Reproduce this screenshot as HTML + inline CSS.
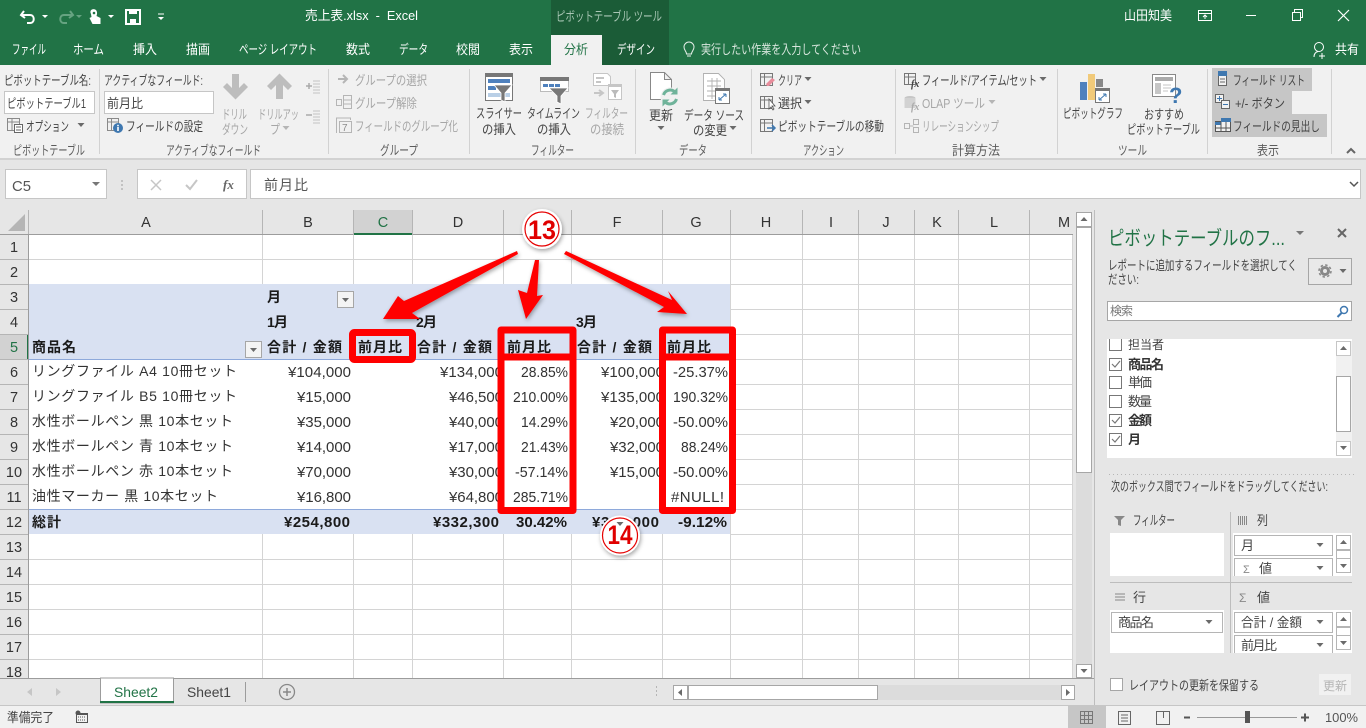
<!DOCTYPE html>
<html lang="ja"><head><meta charset="utf-8"><title>売上表.xlsx - Excel</title>
<style>
html,body{margin:0;padding:0;background:#e6e6e6;overflow:hidden;width:1366px;height:728px}
svg{display:block}
text{font-family:"Liberation Sans","Noto Sans CJK JP",sans-serif;font-size:13px;fill:#444;white-space:pre}
.t{fill:#fff;font-size:13px}
.r{fill:#444;font-size:13px}
.d{fill:#a6a6a6;font-size:13px}
.g{fill:#5c5c5c;font-size:13px}
.c{fill:#333;font-size:15px}
.l{fill:#333;font-size:14px}
.b{fill:#1a1a1a;font-size:14px;font-weight:bold}
.n{fill:#1a1a1a;font-size:15px;font-weight:bold}
.h{fill:#333;font-size:14.500px;text-anchor:middle}
.p{fill:#444;font-size:13px}
.m{fill:#e00000;font-size:27px;font-weight:bold;text-anchor:middle}
</style></head><body>
<svg xmlns="http://www.w3.org/2000/svg" width="1366" height="728" viewBox="0 0 1366 728">
<defs>
<polygon id="dn" points="-3.5,-2 3.5,-2 0,2" fill="#6a6a6a"/>
<polygon id="dn2" points="-3.5,-2 3.5,-2 0,2" fill="#b5b5b5"/>
<polygon id="up" points="-3.5,2 3.5,2 0,-2" fill="#6a6a6a"/>
<filter id="s" x="-30%" y="-30%" width="160%" height="160%"><feDropShadow dx="1" dy="2" stdDeviation="2" flood-color="#000" flood-opacity=".35"/></filter>
</defs>

<!-- base -->
<rect width="1366" height="728" fill="#e6e6e6"/>
<rect width="1366" height="65" fill="#217346"/>
<rect x="551" width="118" height="65" fill="#1b5c37"/>
<rect x="551" y="35" width="51" height="30" fill="#f1f1f1"/>
<rect y="65" width="1366" height="93" fill="#f1f1f1"/>
<rect y="158" width="1366" height="2" fill="#d2d2d2"/>

<!-- QAT -->
<path d="M24 11l-3 4 4 3M22 15h8c5 0 5 8 0 8h-3" fill="none" stroke="#fff" stroke-width="2"/>
<polygon points="42,15 48,15 45,18" fill="#fff"/>
<path d="M70 11l3 4-4 3M72 15h-8c-5 0-5 8 0 8h3" fill="none" stroke="#66a381" stroke-width="2"/>
<polygon points="76,15 82,15 79,18" fill="#66a381"/>
<path d="M91 14c-3-6 7-7 6 0l-.5 2 4 2v6h-8l-3-6 2-1z" fill="#fff"/><circle cx="94" cy="13" r="1.3" fill="#217346"/>
<polygon points="108,15 114,15 111,18" fill="#fff"/>
<path d="M126 10h14v14h-14z" fill="none" stroke="#fff" stroke-width="2"/><rect x="129" y="10" width="8" height="4" fill="#fff"/><rect x="130" y="19" width="6" height="5" fill="#fff"/>
<path d="M158 14h6" stroke="#fff"/><polygon points="158,17 164,17 161,20" fill="#fff"/>
<text class="t" x="305" y="20" textLength="113" lengthAdjust="spacingAndGlyphs">売上表.xlsx  -  Excel</text>
<text x="556" y="21" style="fill:#a9c7b5;font-size:13px" textLength="106" lengthAdjust="spacingAndGlyphs">ピボットテーブル ツール</text>
<text class="t" x="1124" y="20" textLength="48" lengthAdjust="spacingAndGlyphs">山田知美</text>
<path d="M1198.500 10.500h13v10h-13zM1198.500 13.500h13M1205 19v-4M1203 17l2-2 2 2" fill="none" stroke="#fff"/>
<path d="M1246 15.500h10" stroke="#fff"/>
<path d="M1292.500 12.500h8v8h-8zM1294.500 12v-2.500h8v8h-2" fill="none" stroke="#fff"/>
<path d="M1338 10l11 11M1349 10l-11 11" stroke="#fff" stroke-width="1.200"/>

<!-- tabs -->
<text class="t" x="12" y="54" textLength="34" lengthAdjust="spacingAndGlyphs">ファイル</text>
<text class="t" x="73" y="54" textLength="31" lengthAdjust="spacingAndGlyphs">ホーム</text>
<text class="t" x="133" y="54" textLength="24" lengthAdjust="spacingAndGlyphs">挿入</text>
<text class="t" x="186" y="54" textLength="24" lengthAdjust="spacingAndGlyphs">描画</text>
<text class="t" x="239" y="54" textLength="78" lengthAdjust="spacingAndGlyphs">ページ レイアウト</text>
<text class="t" x="346" y="54" textLength="24" lengthAdjust="spacingAndGlyphs">数式</text>
<text class="t" x="399" y="54" textLength="29" lengthAdjust="spacingAndGlyphs">データ</text>
<text class="t" x="456" y="54" textLength="24" lengthAdjust="spacingAndGlyphs">校閲</text>
<text class="t" x="509" y="54" textLength="24" lengthAdjust="spacingAndGlyphs">表示</text>
<text x="564" y="54" style="fill:#217346" textLength="24" lengthAdjust="spacingAndGlyphs">分析</text>
<text class="t" x="617" y="54" textLength="38" lengthAdjust="spacingAndGlyphs">デザイン</text>
<path d="M686.500 54c0-3-2.500-3.500-2.500-7a5 5 0 0 1 10 0c0 3.500-2.500 4-2.500 7zM687 56h4" fill="none" stroke="#e6efe9"/>
<text x="701" y="54" style="fill:#d8e6dd" textLength="160" lengthAdjust="spacingAndGlyphs">実行したい作業を入力してください</text>
<circle cx="1319" cy="47" r="4.500" fill="none" stroke="#fff"/><path d="M1314 57c0-4 2-5 4-5.500M1322 53v6M1319 56h6" fill="none" stroke="#fff"/>
<text class="t" x="1335" y="54" textLength="24" lengthAdjust="spacingAndGlyphs">共有</text>

<!-- ribbon separators -->
<path d="M99.500 69v85M328.500 69v85M469.500 69v85M635.500 69v85M751.500 69v85M895.500 69v85M1057.500 69v85M1207.500 69v85M1331.500 69v85" stroke="#d2d2d2"/>
<g class="grp">
<text class="g" x="13" y="155" textLength="72" lengthAdjust="spacingAndGlyphs">ピボットテーブル</text>
<text class="g" x="166" y="155" textLength="95" lengthAdjust="spacingAndGlyphs">アクティブなフィールド</text>
<text class="g" x="380" y="155" textLength="38" lengthAdjust="spacingAndGlyphs">グループ</text>
<text class="g" x="531" y="155" textLength="43" lengthAdjust="spacingAndGlyphs">フィルター</text>
<text class="g" x="679" y="155" textLength="28" lengthAdjust="spacingAndGlyphs">データ</text>
<text class="g" x="803" y="155" textLength="41" lengthAdjust="spacingAndGlyphs">アクション</text>
<text class="g" x="952" y="155" textLength="48" lengthAdjust="spacingAndGlyphs">計算方法</text>
<text class="g" x="1118" y="155" textLength="29" lengthAdjust="spacingAndGlyphs">ツール</text>
<text class="g" x="1257" y="155" textLength="22" lengthAdjust="spacingAndGlyphs">表示</text>
</g>
<path d="M1347 153l4-4 4 4" fill="none" stroke="#666" stroke-width="2"/>

<!-- pivot name group -->
<text class="r" x="4" y="85" textLength="87" lengthAdjust="spacingAndGlyphs">ピボットテーブル名:</text>
<rect x="4.500" y="91.500" width="90" height="22" fill="#fff" stroke="#c6c6c6"/>
<text class="r" x="7" y="108" textLength="79" lengthAdjust="spacingAndGlyphs">ピボットテーブル1</text>
<path d="M7.500 118.500h12v12h-12zM7.500 122h12M12 118.500v12" fill="none" stroke="#8a8a8a"/><rect x="14.500" y="124.500" width="8" height="8" fill="#fff" stroke="#666"/><path d="M16 127h5M16 130h5" stroke="#666"/>
<text class="r" x="26" y="131" textLength="43" lengthAdjust="spacingAndGlyphs">オプション</text>
<use href="#dn" x="81" y="125"/>

<!-- active field -->
<text class="r" x="104" y="85" textLength="99" lengthAdjust="spacingAndGlyphs">アクティブなフィールド:</text>
<rect x="104.500" y="91.500" width="109" height="22" fill="#fff" stroke="#c6c6c6"/>
<text class="r" x="107" y="108" textLength="36" lengthAdjust="spacingAndGlyphs">前月比</text>
<path d="M107.500 118.500h11v12h-11zM107.500 122h11M111.500 118.500v12" fill="none" stroke="#8a8a8a"/>
<circle cx="118" cy="128" r="5" fill="#3f78b0"/><rect x="117.200" y="127" width="1.600" height="4" fill="#fff"/><rect x="117.200" y="124.800" width="1.600" height="1.500" fill="#fff"/>
<text class="r" x="126" y="131" textLength="77" lengthAdjust="spacingAndGlyphs">フィールドの設定</text>
<path d="M232 74h7v14l5-5 4 4-12.500 12.500L223 87l4-4 5 5z" fill="#bdbdbd"/>
<path d="M276 99h7V85l5 5 4-4-12.500-12.500L267 86l4 4 5-5z" fill="#bdbdbd"/>
<text class="d" x="222" y="119" textLength="25" lengthAdjust="spacingAndGlyphs">ドリル</text>
<text class="d" x="222" y="134" textLength="26" lengthAdjust="spacingAndGlyphs">ダウン</text>
<text class="d" x="258" y="119" textLength="41" lengthAdjust="spacingAndGlyphs">ドリルアッ</text>
<text class="d" x="270" y="134" textLength="10" lengthAdjust="spacingAndGlyphs">プ</text>
<use href="#dn2" x="286" y="128"/>
<path d="M313 81h7M313 84h7M313 87h7M313 90h7M313 93h7" stroke="#c4c4c4"/><path d="M306 86h6M309 83v6" stroke="#aaa" stroke-width="1.500"/>
<path d="M313 111h7M313 114h7M313 117h7M313 120h7M313 123h7" stroke="#c4c4c4"/><path d="M306 115h6" stroke="#aaa" stroke-width="1.500"/>

<!-- group -->
<path d="M338 79h8M343 75l4 4-4 4" fill="none" stroke="#b5b5b5" stroke-width="2"/>
<text class="d" x="355" y="85" textLength="72" lengthAdjust="spacingAndGlyphs">グループの選択</text>
<path d="M343.500 95.500h8v13h-8zM343.500 100h8M343.500 104h8M336.500 99.500h5v6h-5z" fill="none" stroke="#b5b5b5"/>
<text class="d" x="355" y="108" textLength="62" lengthAdjust="spacingAndGlyphs">グループ解除</text>
<path d="M336.500 133v-15h14v2M339.500 121.500h12v11h-12z" fill="none" stroke="#b5b5b5"/>
<text x="342" y="131" style="font-size:10px;fill:#8d8d8d">7</text>
<text class="d" x="355" y="131" textLength="103" lengthAdjust="spacingAndGlyphs">フィールドのグループ化</text>

<!-- filter -->
<rect x="485.500" y="73.500" width="27" height="27" fill="#fff" stroke="#777"/><rect x="485" y="73" width="28" height="4" fill="#777"/>
<rect x="488" y="79" width="22" height="4" fill="#4f81bd"/><rect x="488" y="86" width="8" height="4" fill="#4f81bd"/><rect x="488" y="93" width="22" height="4" fill="#b9cfe6"/>
<path d="M494 85h18l-7 8v9l-4-2v-7z" fill="#777" stroke="#fff" stroke-width=".8"/>
<rect x="540.500" y="77.500" width="28" height="14" fill="#fff" stroke="#bbb"/><rect x="540" y="77" width="29" height="4" fill="#777"/>
<rect x="543" y="84" width="5" height="3" fill="#4f81bd"/><rect x="549" y="84" width="5" height="3" fill="#4f81bd"/><rect x="555" y="84" width="5" height="3" fill="#4f81bd"/>
<path d="M549 88h19l-7 8v8l-4-2v-6z" fill="#777" stroke="#fff" stroke-width=".8"/>
<path d="M593.500 73.500h14l3 3v9h-17z" fill="#fff" stroke="#c6c6c6"/><path d="M596 78h8M596 82h5" stroke="#c6c6c6" stroke-width="2"/>
<rect x="608.500" y="84.500" width="13" height="15" fill="#fff" stroke="#c6c6c6"/><rect x="608" y="84" width="14" height="3" fill="#c6c6c6"/><path d="M611 90h8l-3 4v4l-2-1v-3z" fill="#bbb"/>
<path d="M594 93h8M599 90l4 3-4 3" fill="none" stroke="#c6c6c6" stroke-width="2"/>
<text class="r" x="476" y="118" textLength="46" lengthAdjust="spacingAndGlyphs">スライサー</text>
<text class="r" x="482" y="134" textLength="34" lengthAdjust="spacingAndGlyphs">の挿入</text>
<text class="r" x="527" y="118" textLength="53" lengthAdjust="spacingAndGlyphs">タイムライン</text>
<text class="r" x="537" y="134" textLength="34" lengthAdjust="spacingAndGlyphs">の挿入</text>
<text class="d" x="585" y="118" textLength="43" lengthAdjust="spacingAndGlyphs">フィルター</text>
<text class="d" x="590" y="134" textLength="34" lengthAdjust="spacingAndGlyphs">の接続</text>

<!-- data -->
<path d="M650.500 72.500h14l7 7v20h-21zM664.500 72.500v7h7" fill="#fff" stroke="#888"/>
<circle cx="670" cy="97" r="9.500" fill="#f1f1f1"/>
<path d="M663.500 95a7 7 0 0 1 11.500-3M676.500 99a7 7 0 0 1-11.500 3" fill="none" stroke="#6fb39a" stroke-width="3"/>
<path d="M677.500 87.500v7h-7zM662.500 106.500v-7h7z" fill="#6fb39a"/>
<path d="M703.500 73.500h15l6 6v21h-21zM707 81h14M707 86h14M707 91h14M707 96h14M712 78v21M717 78v21" fill="#fff" stroke="#b0b0b0" stroke-width=".9"/>
<rect x="715.500" y="88.500" width="14" height="15" fill="#fff" stroke="#777"/><rect x="715" y="88" width="15" height="3" fill="#777"/><path d="M719 100l7-6M726 94v3M726 94h-3M719 100h3M719 100v-3" stroke="#3f78b0" fill="none"/>
<text class="r" x="649" y="120" textLength="24" lengthAdjust="spacingAndGlyphs">更新</text>
<use href="#dn" x="661" y="128"/>
<text class="r" x="684" y="120" textLength="60" lengthAdjust="spacingAndGlyphs">データ ソース</text>
<text class="r" x="693" y="135" textLength="34" lengthAdjust="spacingAndGlyphs">の変更</text>
<use href="#dn" x="733" y="128"/>

<!-- action -->
<path d="M760.500 73.500h12v12h-12zM760.500 77h12M764.500 73.500v12" fill="none" stroke="#777"/><path d="M766 84l6-6 3 2-6 6h-2z" fill="#e88c9b"/>
<text class="r" x="778" y="85" textLength="24" lengthAdjust="spacingAndGlyphs">クリア</text><use href="#dn" x="808" y="79"/>
<path d="M760.500 96.500h12v12h-12zM760.500 100h12M764.500 96.500v12" fill="none" stroke="#777"/><path d="M769 99v10l2-2 2 3 1-1-2-3h3z" fill="#fff" stroke="#555" stroke-width=".8"/>
<text class="r" x="778" y="108" textLength="24" lengthAdjust="spacingAndGlyphs">選択</text><use href="#dn" x="808" y="102"/>
<path d="M760.500 119.500h12v12h-12zM760.500 123h12M764.500 119.500v12" fill="none" stroke="#777"/><path d="M767 128h7M772 125l3 3-3 3" fill="none" stroke="#3f78b0" stroke-width="1.500"/>
<text class="r" x="778" y="131" textLength="106" lengthAdjust="spacingAndGlyphs">ピボットテーブルの移動</text>

<!-- calc -->
<path d="M904.500 73.500h11v11h-11zM904.500 77h11M908.500 73.500v11" fill="none" stroke="#777"/><text x="911" y="87" style="font:italic bold 10px 'Liberation Serif',serif;fill:#444">fx</text>
<text class="r" x="922" y="85" textLength="115" lengthAdjust="spacingAndGlyphs">フィールド/アイテム/セット</text><use href="#dn" x="1043" y="79"/>
<ellipse cx="910" cy="98" rx="5.500" ry="2" fill="#c6c6c6"/><rect x="904.500" y="98" width="11" height="10" fill="#d2d2d2"/><text x="911" y="110" style="font:italic bold 10px 'Liberation Serif',serif;fill:#aaa">fx</text>
<text class="d" x="922" y="108" textLength="63" lengthAdjust="spacingAndGlyphs">OLAP ツール</text><use href="#dn2" x="992" y="102"/>
<path d="M904.500 123.500h5v5h-5zM913.500 119.500h5v5h-5zM913.500 127.500h5v5h-5zM909.500 126h4" fill="none" stroke="#b5b5b5"/>
<text class="d" x="922" y="131" textLength="77" lengthAdjust="spacingAndGlyphs">リレーションシップ</text>

<!-- tools -->
<rect x="1080" y="82" width="7" height="18" fill="#4f81bd"/><rect x="1088" y="74" width="7" height="26" fill="#f1ca7a"/><rect x="1096" y="79" width="7" height="8" fill="#888"/>
<rect x="1095.500" y="88.500" width="14" height="14" fill="#fff" stroke="#777"/><rect x="1095" y="88" width="15" height="3" fill="#777"/><path d="M1099 100l7-6M1106 94v3M1106 94h-3M1099 100h3M1099 100v-3" stroke="#3f78b0" fill="none"/>
<text class="r" x="1063" y="118" textLength="60" lengthAdjust="spacingAndGlyphs">ピボットグラフ</text>
<path d="M1152.500 74.500h23v22h-23z" fill="#fff" stroke="#888"/><rect x="1155" y="77" width="18" height="4" fill="#aaa"/><rect x="1155" y="83" width="6" height="11" fill="#c6c6c6"/><path d="M1163 85h8M1163 88h8M1163 91h5" stroke="#c6c6c6"/>
<text x="1169" y="103" style="font-size:22px;font-weight:bold;fill:#3f78b0">?</text>
<text class="r" x="1144" y="119" textLength="40" lengthAdjust="spacingAndGlyphs">おすすめ</text>
<text class="r" x="1127" y="134" textLength="73" lengthAdjust="spacingAndGlyphs">ピボットテーブル</text>

<!-- show -->
<rect x="1212" y="68" width="100" height="23" fill="#c6c6c6"/><rect x="1212" y="91" width="80" height="23" fill="#c6c6c6"/><rect x="1212" y="114" width="115" height="23" fill="#c6c6c6"/>
<rect x="1218.500" y="71.500" width="8" height="14" fill="#f1f1f1" stroke="#666"/><rect x="1218" y="71" width="9" height="5" fill="#3f78b0"/><path d="M1220 79h5M1220 82h5" stroke="#666"/>
<text class="r" x="1233" y="85" textLength="72" lengthAdjust="spacingAndGlyphs">フィールド リスト</text>
<rect x="1215.500" y="94.500" width="8" height="8" fill="#f1f1f1" stroke="#666"/><path d="M1217 98.500h5M1219.500 96v5" stroke="#3f78b0"/><rect x="1221.500" y="100.500" width="8" height="8" fill="#f1f1f1" stroke="#666"/><path d="M1223 104.500h5" stroke="#3f78b0"/>
<text class="r" x="1235" y="108" textLength="50" lengthAdjust="spacingAndGlyphs">+/- ボタン</text>
<rect x="1215.500" y="121.500" width="15" height="10" fill="#f1f1f1" stroke="#555"/><rect x="1221" y="118" width="10" height="4" fill="#3f78b0"/><rect x="1215" y="122" width="6" height="3" fill="#3f78b0"/><path d="M1216 128h14M1221 122v10M1226 122v10" stroke="#555"/>
<text class="r" x="1233" y="131" textLength="87" lengthAdjust="spacingAndGlyphs">フィールドの見出し</text>

<!-- formula bar -->
<rect x="5.500" y="169.500" width="101" height="29" fill="#fff" stroke="#c6c6c6"/>
<text x="12" y="191" style="font-size:15px;fill:#555" textLength="19" lengthAdjust="spacingAndGlyphs">C5</text>
<polygon points="92,182 100,182 96,186" fill="#777"/>
<path d="M122 180v2M122 184v2M122 188v2" stroke="#b5b5b5" stroke-width="1.500"/>
<rect x="137.500" y="169.500" width="109" height="29" fill="#fff" stroke="#c6c6c6"/>
<path d="M151 180l10 10M161 180l-10 10" stroke="#c6c6c6" stroke-width="1.500"/>
<path d="M186 185l4 4 7-9" fill="none" stroke="#c6c6c6" stroke-width="2"/>
<text x="223" y="189" style="font:italic bold 13px 'Liberation Serif',serif;fill:#666">fx</text>
<rect x="250.500" y="169.500" width="1110" height="29" fill="#fff" stroke="#c6c6c6"/>
<text x="264" y="190" style="font-size:14px;fill:#555" textLength="44">前月比</text>
<path d="M1350 182l4 4 4-4" fill="none" stroke="#555" stroke-width="1.500"/>

<!-- sheet -->
<rect x="29" y="235" width="1044" height="443" fill="#fff"/>
<path fill="none" stroke="#d4d4d4" d="M29 259.500h1044M29 284.500h1044M731 309.500h342M731 334.500h342M731 359.500h342M731 384.500h342M731 409.500h342M731 434.500h342M731 459.500h342M731 484.500h342M731 509.500h342M731 534.500h342M29 559.500h1044M29 584.500h1044M29 609.500h1044M29 634.500h1044M29 659.500h1044M262.500 235v49M353.500 235v49M412.500 235v49M503.500 235v49M571.500 235v49M662.500 235v49M730.500 235v443M802.500 235v443M858.500 235v443M914.500 235v443M958.500 235v443M1029.500 235v443M1072.500 235v443M262.500 534v144M353.500 534v144M412.500 534v144M503.500 534v144M571.500 534v144M662.500 534v144"/>
<rect x="29" y="284" width="701" height="75" fill="#d9e1f2"/>
<rect x="29" y="510" width="701" height="24" fill="#d9e1f2"/>
<path d="M29 359.500h701M29 509.500h701" stroke="#8ea9db"/>

<!-- headers -->
<rect x="0" y="210" width="1073" height="25" fill="#e6e6e6"/>
<rect x="0" y="235" width="28" height="443" fill="#e6e6e6"/>
<rect x="354" y="210" width="58" height="23" fill="#d2d2d2"/><rect x="353" y="233" width="60" height="2" fill="#217346"/>
<rect x="0" y="334" width="27" height="25" fill="#d2d2d2"/><rect x="27" y="334" width="2" height="25" fill="#217346"/>
<polygon points="25,214 25,231 8,231" fill="#b5b5b5"/>
<path stroke="#b5b5b5" fill="none" d="M28.500 210v25M262.500 210v25M353.500 210v25M412.500 210v25M503.500 210v25M571.500 210v25M662.500 210v25M730.500 210v25M802.500 210v25M858.500 210v25M914.500 210v25M958.500 210v25M1029.500 210v25M0 259.500h28M0 284.500h28M0 309.500h28M0 334.500h28M0 359.500h28M0 384.500h28M0 409.500h28M0 434.500h28M0 459.500h28M0 484.500h28M0 509.500h28M0 534.500h28M0 559.500h28M0 584.500h28M0 609.500h28M0 634.500h28M0 659.500h28"/>
<path stroke="#9c9c9c" fill="none" d="M0 234.500h353M413 234.500h660M28.500 235v443"/>
<text class="h" x="146" y="227">A</text><text class="h" x="308" y="227">B</text><text class="h" x="383" y="227" style="fill:#217346">C</text><text class="h" x="458" y="227">D</text><text class="h" x="617" y="227">F</text><text class="h" x="696" y="227">G</text><text class="h" x="766" y="227">H</text><text class="h" x="831" y="227">I</text><text class="h" x="886" y="227">J</text><text class="h" x="937" y="227">K</text><text class="h" x="994" y="227">L</text><text class="h" x="1064" y="227">M</text>
<text class="h" x="14" y="252">1</text><text class="h" x="14" y="277">2</text><text class="h" x="14" y="302">3</text><text class="h" x="14" y="327">4</text><text class="h" x="14" y="352" style="fill:#217346">5</text><text class="h" x="14" y="377">6</text><text class="h" x="14" y="402">7</text><text class="h" x="14" y="427">8</text><text class="h" x="14" y="452">9</text><text class="h" x="14" y="477">10</text><text class="h" x="14" y="502">11</text><text class="h" x="14" y="527">12</text><text class="h" x="14" y="552">13</text><text class="h" x="14" y="577">14</text><text class="h" x="14" y="602">15</text><text class="h" x="14" y="627">16</text><text class="h" x="14" y="652">17</text><text class="h" x="14" y="677">18</text>

<!-- pivot text -->
<text class="b" x="267" y="302" textLength="12">月</text>
<rect x="337.500" y="291.500" width="16" height="16" fill="#f4f4f4" stroke="#a6a6a6"/><use href="#dn" x="345.500" y="300"/>
<text class="b" x="267" y="327" textLength="21">1月</text><text class="b" x="416" y="327" textLength="21">2月</text><text class="b" x="576" y="327" textLength="21">3月</text>
<text class="b" x="32" y="352" textLength="44">商品名</text>
<rect x="245.500" y="341.500" width="16" height="16" fill="#f4f4f4" stroke="#a6a6a6"/><use href="#dn" x="253.500" y="350"/>
<text class="b" x="267" y="352" textLength="75">合計 / 金額</text>
<text class="b" x="358" y="352" textLength="44">前月比</text>
<text class="b" x="417" y="352" textLength="75">合計 / 金額</text>
<text class="b" x="507" y="352" textLength="44">前月比</text>
<text class="b" x="577" y="352" textLength="75">合計 / 金額</text>
<text class="b" x="667" y="352" textLength="44">前月比</text>

<text class="l" x="32" y="376" textLength="205">リングファイル A4 10冊セット</text>
<text class="l" x="32" y="401" textLength="205">リングファイル B5 10冊セット</text>
<text class="l" x="32" y="426" textLength="201">水性ボールペン 黒 10本セット</text>
<text class="l" x="32" y="451" textLength="201">水性ボールペン 青 10本セット</text>
<text class="l" x="32" y="476" textLength="201">水性ボールペン 赤 10本セット</text>
<text class="l" x="32" y="501" textLength="186">油性マーカー 黒 10本セット</text>

<text class="c" x="288" y="377" textLength="63">¥104,000</text>
<text class="c" x="297" y="402" textLength="54">¥15,000</text>
<text class="c" x="297" y="427" textLength="54">¥35,000</text>
<text class="c" x="297" y="452" textLength="54">¥14,000</text>
<text class="c" x="297" y="477" textLength="54">¥70,000</text>
<text class="c" x="297" y="502" textLength="54">¥16,800</text>
<text class="c" x="440" y="377" textLength="63">¥134,000</text>
<text class="c" x="449" y="402" textLength="54">¥46,500</text>
<text class="c" x="449" y="427" textLength="54">¥40,000</text>
<text class="c" x="449" y="452" textLength="54">¥17,000</text>
<text class="c" x="449" y="477" textLength="54">¥30,000</text>
<text class="c" x="449" y="502" textLength="54">¥64,800</text>
<text class="c" x="601" y="377" textLength="63">¥100,000</text>
<text class="c" x="601" y="402" textLength="63">¥135,000</text>
<text class="c" x="610" y="427" textLength="54">¥20,000</text>
<text class="c" x="610" y="452" textLength="54">¥32,000</text>
<text class="c" x="610" y="477" textLength="54">¥15,000</text>

<text class="c" x="521" y="377" textLength="47" lengthAdjust="spacingAndGlyphs">28.85%</text>
<text class="c" x="513" y="402" textLength="55" lengthAdjust="spacingAndGlyphs">210.00%</text>
<text class="c" x="521" y="427" textLength="47" lengthAdjust="spacingAndGlyphs">14.29%</text>
<text class="c" x="521" y="452" textLength="47" lengthAdjust="spacingAndGlyphs">21.43%</text>
<text class="c" x="515" y="477" textLength="53" lengthAdjust="spacingAndGlyphs">-57.14%</text>
<text class="c" x="513" y="502" textLength="55" lengthAdjust="spacingAndGlyphs">285.71%</text>
<text class="c" x="673" y="377" textLength="55" lengthAdjust="spacingAndGlyphs">-25.37%</text>
<text class="c" x="673" y="402" textLength="55" lengthAdjust="spacingAndGlyphs">190.32%</text>
<text class="c" x="673" y="427" textLength="55" lengthAdjust="spacingAndGlyphs">-50.00%</text>
<text class="c" x="681" y="452" textLength="47" lengthAdjust="spacingAndGlyphs">88.24%</text>
<text class="c" x="673" y="477" textLength="55" lengthAdjust="spacingAndGlyphs">-50.00%</text>
<text class="c" x="671" y="502" textLength="53">#NULL!</text>

<text class="b" x="32" y="527" textLength="29">総計</text>
<text class="n" x="284" y="527" textLength="66">¥254,800</text>
<text class="n" x="433" y="527" textLength="66">¥332,300</text>
<text class="n" x="516" y="527" textLength="51" lengthAdjust="spacingAndGlyphs">30.42%</text>
<text class="n" x="592" y="527" textLength="67">¥302,000</text>
<text class="n" x="678" y="527" textLength="49" lengthAdjust="spacingAndGlyphs">-9.12%</text>

<!-- red boxes -->
<g fill="none" stroke="#f00" stroke-width="7" stroke-linejoin="round">
<rect x="352.500" y="332.500" width="60" height="27" rx="2"/>
<rect x="501" y="330" width="72" height="27"/>
<rect x="501" y="357" width="72" height="153.500"/>
<rect x="662.500" y="330" width="70" height="27"/>
<rect x="662.500" y="357" width="70" height="153.500"/>
</g>

<!-- arrows -->
<g fill="#f00" filter="url(#s)">
<polygon points="383,319 398,296 404,301 517,251 518,254 412,313 420,319"/>
<polygon points="526,319 518,290 527,293 535,260 539,260 537,296 543,295"/>
<polygon points="687,314 668,291 672,300 566,251 564,254 664,307 657,312"/>
</g>

<!-- badges -->
<circle cx="542" cy="229" r="20" fill="#fff" filter="url(#s)"/>
<circle cx="542" cy="229" r="17" fill="none" stroke="#e60000" stroke-width="1.200"/>
<text class="m" x="542" y="239" textLength="28" lengthAdjust="spacingAndGlyphs">13</text>
<circle cx="620" cy="535.500" r="20" fill="#fff" filter="url(#s)"/>
<circle cx="620" cy="535.500" r="17.500" fill="none" stroke="#e60000" stroke-width="1.200"/>
<use href="#dn" x="620" y="524"/>
<text class="m" x="620" y="544" textLength="25" lengthAdjust="spacingAndGlyphs">14</text>

<!-- v scrollbar -->
<rect x="1073" y="210" width="21" height="468" fill="#e6e6e6"/>
<rect x="1076" y="212" width="16" height="466" fill="#dcdcdc"/>
<rect x="1076.500" y="212.500" width="15" height="14" fill="#fff" stroke="#a6a6a6"/><use href="#up" x="1084" y="219"/>
<rect x="1076.500" y="227.500" width="15" height="245" fill="#fff" stroke="#a6a6a6"/>
<rect x="1076.500" y="664.500" width="15" height="13" fill="#fff" stroke="#a6a6a6"/><use href="#dn" x="1084" y="671"/>

<!-- pane -->
<rect x="1094" y="210" width="1" height="496" fill="#bdbdbd"/>
<text x="1108" y="245" style="font-size:20px;fill:#217346" textLength="177" lengthAdjust="spacingAndGlyphs">ピボットテーブルのフ...</text>
<polygon points="1296,231 1304,231 1300,235" fill="#777"/>
<path d="M1338 229l8 8M1346 229l-8 8" stroke="#666" stroke-width="2"/>
<text class="p" x="1108" y="270" textLength="189" lengthAdjust="spacingAndGlyphs">レポートに追加するフィールドを選択してく</text>
<text class="p" x="1108" y="284" textLength="31" lengthAdjust="spacingAndGlyphs">ださい:</text>
<rect x="1308.500" y="258.500" width="43" height="26" fill="#e9e9e9" stroke="#a6a6a6"/>
<circle cx="1325" cy="271" r="3.500" fill="none" stroke="#888" stroke-width="3"/><circle cx="1325" cy="271" r="6" fill="none" stroke="#888" stroke-width="1.500" stroke-dasharray="2.500 2.200"/>
<use href="#dn" x="1343" y="271"/>
<rect x="1107.500" y="301.500" width="244" height="19" fill="#fff" stroke="#a6a6a6"/>
<text x="1110" y="315" style="font-size:12px;fill:#777" textLength="23">検索</text>
<circle cx="1344" cy="310" r="3.500" fill="none" stroke="#3f78b0" stroke-width="1.500"/><path d="M1341.500 313l-4 4" stroke="#3f78b0" stroke-width="2"/>

<rect x="1107" y="339" width="245" height="119" fill="#fff"/>
<rect x="1336" y="341" width="16" height="115" fill="#f1f1f1"/>
<rect x="1336.500" y="341.500" width="14" height="14" fill="#fff" stroke="#c6c6c6"/><use href="#up" x="1343.500" y="348"/>
<rect x="1336.500" y="376.500" width="14" height="55" fill="#fff" stroke="#a6a6a6"/>
<rect x="1336.500" y="441.500" width="14" height="14" fill="#fff" stroke="#c6c6c6"/><use href="#dn" x="1343.500" y="448"/>
<text class="p" x="1128" y="349" textLength="36" lengthAdjust="spacingAndGlyphs">担当者</text>
<rect x="1107" y="332" width="235" height="7" fill="#e6e6e6"/>
<path d="M1109.500 339v11.500h12V339" fill="#fff" stroke="#777"/>
<g fill="#fff" stroke="#777">
<rect x="1109.500" y="358.500" width="12" height="12"/><rect x="1109.500" y="376.500" width="12" height="12"/><rect x="1109.500" y="395.500" width="12" height="12"/><rect x="1109.500" y="414.500" width="12" height="12"/><rect x="1109.500" y="433.500" width="12" height="12"/>
</g>
<path d="M1112 364l3 3 5-6M1112 420l3 3 5-6M1112 439l3 3 5-6" fill="none" stroke="#777" stroke-width="1.200"/>
<text class="p" x="1128" y="369" style="font-weight:bold;fill:#333" textLength="36">商品名</text>
<text class="p" x="1128" y="387" textLength="24">単価</text>
<text class="p" x="1128" y="406" textLength="24">数量</text>
<text class="p" x="1128" y="425" style="font-weight:bold;fill:#333" textLength="24">金額</text>
<text class="p" x="1128" y="444" style="font-weight:bold;fill:#333" textLength="12">月</text>

<path d="M1109 474.500h247" stroke="#b5b5b5" stroke-dasharray="1 3"/>
<text class="p" x="1111" y="491" textLength="217" lengthAdjust="spacingAndGlyphs">次のボックス間でフィールドをドラッグしてください:</text>

<path d="M1114 516h11l-4 4v6l-3-1v-5z" fill="#888"/>
<text class="p" x="1133" y="525" textLength="42" lengthAdjust="spacingAndGlyphs">フィルター</text>
<path d="M1238.500 516v9M1240.500 516v9M1242.500 516v9M1244.500 516v9M1246.500 516v9" stroke="#888"/>
<text class="p" x="1257" y="525" textLength="11" lengthAdjust="spacingAndGlyphs">列</text>
<rect x="1110" y="533" width="114" height="43" fill="#fff"/>
<rect x="1233" y="533" width="119" height="43" fill="#fff"/>
<rect x="1234.500" y="535.500" width="98" height="20" fill="#fff" stroke="#b5b5b5"/>
<text class="p" x="1241" y="550" textLength="12">月</text><use href="#dn" x="1320" y="545"/>
<path d="M1234.500 576v-17.500h98v17.500" fill="none" stroke="#b5b5b5"/>
<text x="1243" y="573" style="font-size:11px;fill:#888">Σ</text><text class="p" x="1259" y="573" textLength="12">値</text><use href="#dn" x="1320" y="568"/>
<rect x="1336.500" y="535.500" width="14" height="14" fill="#fff" stroke="#b5b5b5"/><use href="#up" x="1343.500" y="542"/>
<rect x="1336.500" y="550.500" width="14" height="8" fill="#fff" stroke="#b5b5b5"/>
<rect x="1336.500" y="558.500" width="14" height="14" fill="#fff" stroke="#b5b5b5"/><use href="#dn" x="1343.500" y="566"/>

<path d="M1110 582.500h242M1230.500 512v141" stroke="#bdbdbd"/>
<path d="M1115 594h10M1115 597h10M1115 600h10" stroke="#888"/>
<text class="p" x="1133" y="602" textLength="12">行</text>
<text x="1239" y="602" style="font-size:12px;fill:#888">Σ</text><text class="p" x="1257" y="602" textLength="12">値</text>
<rect x="1110" y="610" width="114" height="43" fill="#fff"/>
<rect x="1233" y="610" width="119" height="43" fill="#fff"/>
<rect x="1111.500" y="612.500" width="111" height="20" fill="#fff" stroke="#b5b5b5"/>
<text class="p" x="1118" y="627" textLength="36">商品名</text><use href="#dn" x="1209" y="622"/>
<rect x="1234.500" y="612.500" width="98" height="20" fill="#fff" stroke="#b5b5b5"/>
<text class="p" x="1241" y="627" textLength="61" lengthAdjust="spacingAndGlyphs">合計 / 金額</text><use href="#dn" x="1320" y="622"/>
<path d="M1234.500 653v-17.500h98v17.500" fill="none" stroke="#b5b5b5"/>
<text class="p" x="1241" y="650" textLength="36">前月比</text><use href="#dn" x="1320" y="645"/>
<rect x="1336.500" y="612.500" width="14" height="14" fill="#fff" stroke="#b5b5b5"/><use href="#up" x="1343.500" y="619"/>
<rect x="1336.500" y="627.500" width="14" height="8" fill="#fff" stroke="#b5b5b5"/>
<rect x="1336.500" y="635.500" width="14" height="14" fill="#fff" stroke="#b5b5b5"/><use href="#dn" x="1343.500" y="643"/>

<rect x="1110.500" y="678.500" width="12" height="12" fill="#fff" stroke="#a6a6a6"/>
<text class="p" x="1129" y="690" textLength="130" lengthAdjust="spacingAndGlyphs">レイアウトの更新を保留する</text>
<rect x="1319" y="674" width="32" height="21" fill="#f1f1f1"/>
<text x="1323" y="690" style="font-size:12px;fill:#b5b5b5" textLength="24">更新</text>

<!-- bottom tabs -->
<rect x="0" y="678" width="1094" height="28" fill="#e6e6e6"/>
<path d="M0 678.500h1094" stroke="#9c9c9c"/>
<polygon points="32,688 32,696 27,692" fill="#c6c6c6"/><polygon points="56,688 56,696 61,692" fill="#c6c6c6"/>
<rect x="100.500" y="678" width="73" height="25" fill="#fff" stroke="#9c9c9c"/>
<rect x="100" y="701" width="74" height="2" fill="#217346"/>
<text x="114" y="697" style="font-size:14px;fill:#217346" textLength="44" lengthAdjust="spacingAndGlyphs">Sheet2</text>
<text x="187" y="697" style="font-size:14px;fill:#444" textLength="44" lengthAdjust="spacingAndGlyphs">Sheet1</text>
<path d="M245.500 682v20" stroke="#9c9c9c"/>
<circle cx="287" cy="692" r="7.500" fill="none" stroke="#888" stroke-width="1.300"/><path d="M283 692h8M287 688v8" stroke="#888" stroke-width="1.500"/>
<path d="M656.500 686v2M656.500 690v2M656.500 694v2" stroke="#b5b5b5"/>
<rect x="673" y="685" width="401" height="15" fill="#dcdcdc"/>
<rect x="673.500" y="685.500" width="14" height="14" fill="#fff" stroke="#a6a6a6"/><polygon points="682,689 682,696 678,692.500" fill="#6a6a6a"/>
<rect x="688.500" y="685.500" width="189" height="14" fill="#fff" stroke="#a6a6a6"/>
<rect x="1061.500" y="685.500" width="13" height="14" fill="#fff" stroke="#a6a6a6"/><polygon points="1066,689 1066,696 1070,692.500" fill="#6a6a6a"/>

<!-- status -->
<rect x="0" y="706" width="1366" height="22" fill="#f1f1f1"/>
<path d="M0 705.500h1366" stroke="#c6c6c6"/>
<text x="7" y="722" style="font-size:13px;fill:#444" textLength="47" lengthAdjust="spacingAndGlyphs">準備完了</text>
<circle cx="78" cy="713" r="2.500" fill="#555"/><rect x="76.500" y="713.500" width="11" height="9" fill="#f1f1f1" stroke="#555"/><rect x="76" y="713" width="12" height="2" fill="#555"/><path d="M78 717h8M78 720h8" stroke="#555" stroke-dasharray="1 1"/>
<rect x="1068" y="706" width="38" height="22" fill="#c6c6c6"/>
<path d="M1080.500 711.500h12v12h-12zM1080.500 715.500h12M1080.500 719.500h12M1084.500 711.500v12M1088.500 711.500v12" fill="none" stroke="#777"/>
<path d="M1118.500 711.500h12v13h-12zM1121 715h7M1121 718h7M1121 721h7" fill="none" stroke="#666"/>
<path d="M1156.500 711.500h13v13h-13zM1163.500 711.500v6.500" fill="none" stroke="#666"/>
<path d="M1184 717.500h6" stroke="#555" stroke-width="2"/>
<path d="M1197 717.500h100" stroke="#999"/>
<rect x="1245" y="711" width="5" height="12" fill="#555"/>
<path d="M1301 717.500h8M1305 713.500v8" stroke="#555" stroke-width="2"/>
<text x="1325" y="722" style="font-size:13px;fill:#555" textLength="33" lengthAdjust="spacingAndGlyphs">100%</text>
</svg>
</body></html>
